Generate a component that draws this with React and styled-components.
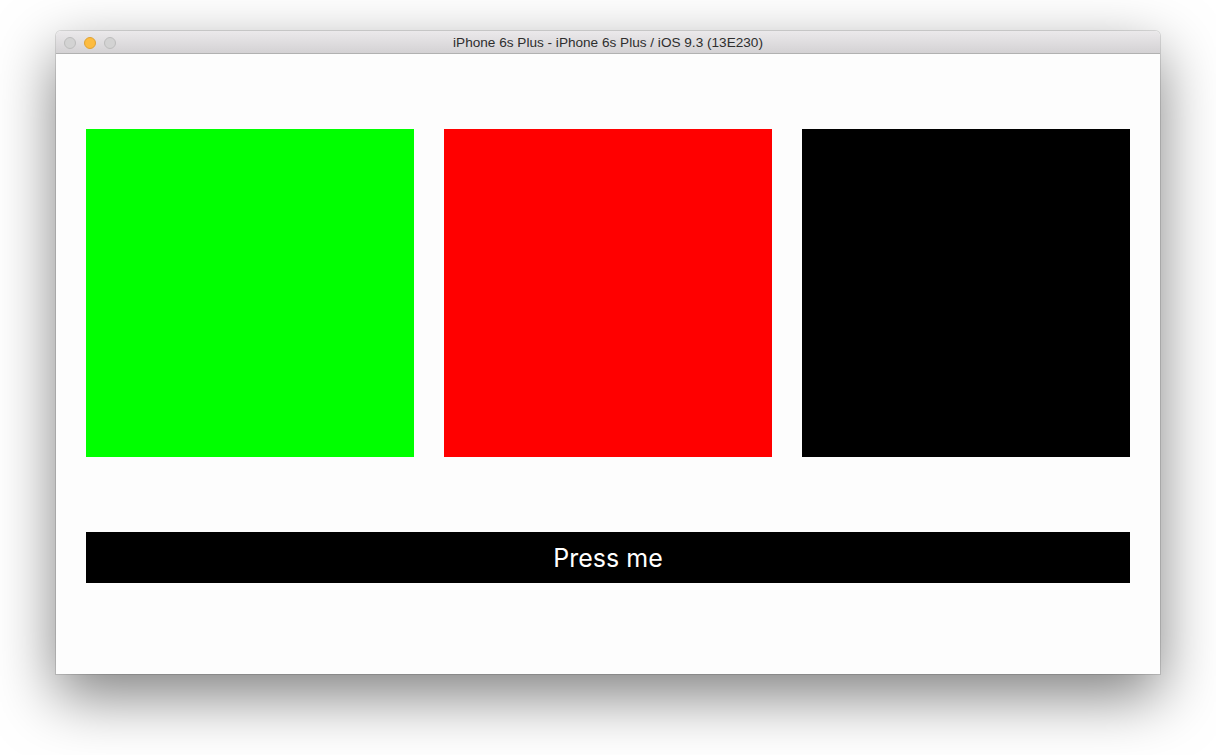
import styled, { createGlobalStyle } from 'styled-components'

const GlobalStyle = createGlobalStyle`
html, body {
margin: 0;
padding: 0;
background: #ffffff;
}
`

const Page = styled.div`
width: 1216px;
height: 755px;
padding: 31px 0 0 56px;
box-sizing: border-box;
overflow: hidden;
`

const Window = styled.div`
width: 1104px;
height: 643px;
display: flex;
flex-direction: column;
border-radius: 5px 5px 0 0;
background: #fdfdfd;
box-shadow: 0 0 0 1px rgba(0, 0, 0, 0.12), 0 22px 60px rgba(0, 0, 0, 0.5);
overflow: hidden;
`

const TitleBar = styled.div`
height: 22px;
flex-shrink: 0;
position: relative;
display: flex;
align-items: center;
justify-content: center;
background: linear-gradient(#ebe9eb, #d4d2d4);
border-bottom: 1px solid #b1b1b1;
`

const Lights = styled.div`
position: absolute;
left: 8px;
top: 6px;
display: flex;
gap: 8px;
`

const Light = styled.span`
width: 10px;
height: 10px;
border-radius: 50%;
background: ${p => p.color};
border: 1px solid ${p => p.border};
box-sizing: content-box;
`

const Title = styled.span`
font-family: "Liberation Sans", Arial, sans-serif;
font-size: 13.6px;
color: #2e2e2e;
`

const Content = styled.div`
flex: 1;
padding: 75px 30px 0 30px;
display: flex;
flex-direction: column;
gap: 75px;
`

const SquareRow = styled.div`
display: flex;
gap: 30px;
`

const Square = styled.div`
width: 328px;
height: 328px;
background: ${p => p.color};
`

const Button = styled.div`
height: 51px;
background: #000;
color: #fff;
display: flex;
align-items: center;
justify-content: center;
font-family: Inter, "Open Sans", sans-serif;
font-size: 25px;
`

const App = () => {
    return (
        <>
            <GlobalStyle />
            <Page>
                <Window>
                    <TitleBar>
                        <Lights>
                            <Light color="#d3d3d3" border="#bdbdbd" />
                            <Light color="#fdbc40" border="#e0a233" />
                            <Light color="#d3d3d3" border="#bdbdbd" />
                        </Lights>
                        <Title>iPhone 6s Plus - iPhone 6s Plus / iOS 9.3 (13E230)</Title>
                    </TitleBar>
                    <Content>
                        <SquareRow>
                            <Square color="#00ff00" />
                            <Square color="#ff0000" />
                            <Square color="#000000" />
                        </SquareRow>
                        <Button>Press me</Button>
                    </Content>
                </Window>
            </Page>
        </>
    )
}

export default App
